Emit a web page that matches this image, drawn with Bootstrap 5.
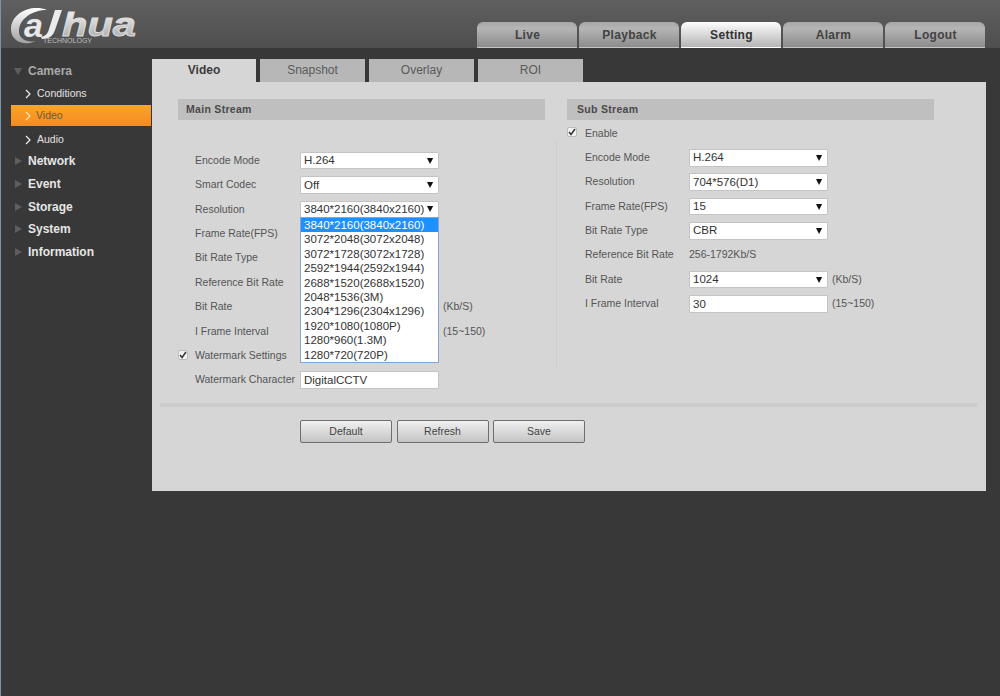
<!DOCTYPE html>
<html lang="en"><head><meta charset="utf-8"><title>Dahua Setting</title>
<link href="https://cdn.jsdelivr.net/npm/bootstrap@5.3.0/dist/css/bootstrap.min.css" rel="stylesheet">
<style>
html,body{height:100%}
body{background:#383838;font-family:"Liberation Sans",Arial,sans-serif;font-size:10.5px;color:#555;border-left:1px solid #7f93a8;overflow:hidden}
.hdr{height:48px;background:linear-gradient(#5f5f5f,#4f4f4f);padding:22px 13px 0 0}
.logo{position:absolute;left:8px;top:6px}
.toptab{width:100px;height:26px;margin-right:2px;border-radius:6px 6px 0 0;background:linear-gradient(#a6a6a6 0,#b5b5b5 25%,#8c8c8c 100%);font-weight:700;font-size:12px;letter-spacing:.3px;text-indent:1px;color:#424242;padding:0;line-height:26px;text-align:center;border:0;border-bottom:1px solid #c5c5c5}
.toptab.on{background:linear-gradient(#fff 0,#e4e4e4 35%,#b5b5b5 100%);border-bottom-color:#fff;color:#333}
.side{width:150px;padding-top:11.500px}
.navhead{height:22.7px;line-height:22.7px;font-weight:700;font-size:12px;color:#e6e6e6;padding-left:27px;position:relative}
.navhead.open{color:#a9a9a9}
.navhead::before{content:"";position:absolute;left:14px;top:7px;border:solid transparent;border-width:4.5px 0 4.5px 7px;border-left-color:#5e5e5e}
.navhead.open::before{left:13px;top:8px;border-width:7px 4.5px 0 4.5px;border-color:#5e5e5e transparent transparent}
.navsub{height:22.7px;line-height:22.7px;padding-left:36px;color:#e2e2e2;position:relative}
.navsub svg{position:absolute;left:24px;top:7px}
.navsub.on{margin-left:10px;padding-left:25px;height:21px;line-height:21px;margin-bottom:1.7px;background:linear-gradient(#f7a52b,#f98a20);color:#6a5a3a}
.navsub.on svg{left:14px;top:6px}
.stage{padding-top:11px;width:834px;margin-left:1px}
.ptab{width:105px;height:23px;margin-right:4px;line-height:23px;text-align:center;background:#b7b7b7;font-size:12px;color:#5a5a5a}
.ptab.on{background:#d6d6d6;font-weight:700;color:#3c3c3c;width:104px}
.pbody{height:409px;background:#d6d6d6;position:relative;padding:17px 0 0 26px}
.streamL{width:367px;position:relative}
.streamR{width:367px;margin-left:22px;position:relative}
.shead{height:21px;line-height:21px;background:#bfbfbf;padding-left:8px;font-weight:700;font-size:10.5px;letter-spacing:.3px;color:#4a4a4a}
.streamR .shead{padding-left:10px}
.spaceL{height:28.5px}
.spaceR{height:1.2px}
.frow{height:24.4px;display:flex;align-items:center;position:relative}
.flbl{width:122px;padding-left:17px;flex:none;white-space:nowrap}
.frowR .flbl{padding-left:18px}
.chk{position:absolute;left:0;top:6px;width:10px;height:10px;background:#f2f2f2;border:1px solid #bbb;border-radius:2px;display:flex;align-items:center;justify-content:center}
.sel.form-select,.inp.form-control{width:139px;height:17.5px;min-height:0;flex:none;padding:0 0 0 3px;border:1px solid #c4c4c4;border-radius:1px;font-size:11.5px;line-height:15px;color:#333;background-color:#fff;box-shadow:none}
.sel.form-select{background-image:url("data:image/svg+xml,%3Csvg xmlns='http://www.w3.org/2000/svg' width='8' height='6'%3E%3Cpath d='M0 0h7L3.500 6z' fill='%23111'/%3E%3C/svg%3E");background-size:7px 6px;background-position:right 4px center}
.unit{margin-left:4px;white-space:nowrap}
.blank{width:139px;flex:none}
.droplist{position:absolute;left:122px;top:118px;width:139px;height:146px;background:#fff;border:1px solid #7fa6d6;z-index:5;font-size:11.5px;color:#333}
.droplist div{height:14.4px;line-height:14.4px;padding-left:3px}
.droplist .pick{background:#1e90ff;color:#fff}
.vrule{position:absolute;left:-11px;top:41px;width:1px;height:228px;background:#cdcdcd}
.hrule{position:absolute;left:8px;right:9px;top:321px;height:4px;background:#cbcbcb}
.btnrow{position:absolute;left:148px;top:338px;gap:4.500px}
.dbtn{width:92px;height:22.500px;padding:0;font-size:10.500px;line-height:20px;color:#444;background:linear-gradient(#f0f0f0,#c4c4c4);border:1px solid #6e6e6e;border-radius:2px}
</style></head>
<body>
<header class="hdr d-flex justify-content-end position-relative">
<svg class="logo" width="128" height="40" viewBox="0 0 128 40">
<defs><linearGradient id="lg" x1="0" y1="0" x2="0" y2="1"><stop offset="0" stop-color="#fff"/><stop offset="1" stop-color="#a0a0a0"/></linearGradient></defs>
<path d="M38 4C22-2 3 7 2 22c-1 13 13 19 25 13-9 2-18-2-17-11C11 12 24 4 38 4z" fill="url(#lg)"/>
<text x="15" y="31" font-family="Liberation Sans" font-weight="700" font-style="italic" font-size="34" fill="#e8e8e8">a</text>
<path d="M46 4h7L46 24c-2 6-6 9-13 9l-1-2c5-1 7-4 8-8z" fill="#ececec"/>
<text x="53" y="30" font-family="Liberation Sans" font-weight="700" font-style="italic" font-size="34" textLength="74" lengthAdjust="spacingAndGlyphs" fill="url(#lg)" stroke="#ddd" stroke-width=".9">hua</text>
<text x="34" y="37" font-family="Liberation Sans" font-size="7" textLength="49" fill="#bdbdbd">TECHNOLOGY</text>
</svg>
<div class="toptab">Live</div><div class="toptab">Playback</div><div class="toptab on">Setting</div><div class="toptab">Alarm</div><div class="toptab">Logout</div>
</header>
<div class="d-flex">
<nav class="side">
<div class="navhead open">Camera</div>
<div class="navsub"><svg width="7" height="10" viewBox="0 0 7 10"><path d="M1 1l4 4-4 4" fill="none" stroke="#eee" stroke-width="1.2"/></svg>Conditions</div>
<div class="navsub on"><svg width="7" height="10" viewBox="0 0 7 10"><path d="M1 1l4 4-4 4" fill="none" stroke="#ffe3b0" stroke-width="1.2"/></svg>Video</div>
<div class="navsub"><svg width="7" height="10" viewBox="0 0 7 10"><path d="M1 1l4 4-4 4" fill="none" stroke="#eee" stroke-width="1.2"/></svg>Audio</div>
<div class="navhead">Network</div><div class="navhead">Event</div><div class="navhead">Storage</div><div class="navhead">System</div><div class="navhead">Information</div>
</nav>
<main class="stage">
<div class="d-flex"><div class="ptab on">Video</div><div class="ptab">Snapshot</div><div class="ptab">Overlay</div><div class="ptab">ROI</div></div>
<div class="pbody d-flex align-items-start">
<section class="streamL">
<div class="shead">Main Stream</div>
<div class="spaceL"></div>
<div class="frow"><span class="flbl">Encode Mode</span><select class="form-select sel"><option>H.264</option></select></div>
<div class="frow"><span class="flbl">Smart Codec</span><select class="form-select sel"><option>Off</option></select></div>
<div class="frow"><span class="flbl">Resolution</span><select class="form-select sel"><option>3840*2160(3840x2160)</option></select></div>
<div class="frow"><span class="flbl">Frame Rate(FPS)</span></div>
<div class="frow"><span class="flbl">Bit Rate Type</span></div>
<div class="frow"><span class="flbl">Reference Bit Rate</span></div>
<div class="frow"><span class="flbl">Bit Rate</span><span class="blank"></span><span class="unit">(Kb/S)</span></div>
<div class="frow"><span class="flbl">I Frame Interval</span><span class="blank"></span><span class="unit">(15~150)</span></div>
<div class="frow"><span class="chk"><svg width="8" height="8" viewBox="0 0 8 8"><path d="M1 4l2 2.500L7 1" fill="none" stroke="#333" stroke-width="1.500"/></svg></span><span class="flbl">Watermark Settings</span></div>
<div class="frow"><span class="flbl">Watermark Character</span><input class="form-control inp" value="DigitalCCTV"></div>
<div class="droplist"><div class="pick">3840*2160(3840x2160)</div><div>3072*2048(3072x2048)</div><div>3072*1728(3072x1728)</div><div>2592*1944(2592x1944)</div><div>2688*1520(2688x1520)</div><div>2048*1536(3M)</div><div>2304*1296(2304x1296)</div><div>1920*1080(1080P)</div><div>1280*960(1.3M)</div><div>1280*720(720P)</div></div>
</section>
<section class="streamR">
<div class="vrule"></div>
<div class="shead">Sub Stream</div>
<div class="spaceR"></div>
<div class="frow frowR"><span class="chk"><svg width="8" height="8" viewBox="0 0 8 8"><path d="M1 4l2 2.500L7 1" fill="none" stroke="#333" stroke-width="1.500"/></svg></span><span class="flbl">Enable</span></div>
<div class="frow frowR"><span class="flbl">Encode Mode</span><select class="form-select sel"><option>H.264</option></select></div>
<div class="frow frowR"><span class="flbl">Resolution</span><select class="form-select sel"><option>704*576(D1)</option></select></div>
<div class="frow frowR"><span class="flbl">Frame Rate(FPS)</span><select class="form-select sel"><option>15</option></select></div>
<div class="frow frowR"><span class="flbl">Bit Rate Type</span><select class="form-select sel"><option>CBR</option></select></div>
<div class="frow frowR"><span class="flbl">Reference Bit Rate</span><span>256-1792Kb/S</span></div>
<div class="frow frowR"><span class="flbl">Bit Rate</span><select class="form-select sel"><option>1024</option></select><span class="unit">(Kb/S)</span></div>
<div class="frow frowR"><span class="flbl">I Frame Interval</span><input class="form-control inp" value="30"><span class="unit">(15~150)</span></div>
</section>
<div class="hrule"></div>
<div class="btnrow d-flex"><button class="btn dbtn">Default</button><button class="btn dbtn">Refresh</button><button class="btn dbtn">Save</button></div>
</div>
</main>
</div>
<script src="https://cdn.jsdelivr.net/npm/bootstrap@5.3.0/dist/js/bootstrap.bundle.min.js"></script>
</body></html>
